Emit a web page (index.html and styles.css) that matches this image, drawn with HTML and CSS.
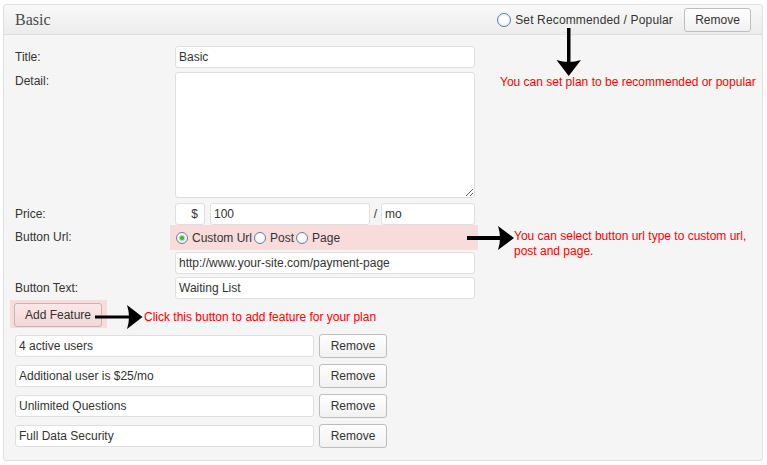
FILE: index.html
```html
<!DOCTYPE html>
<html>
<head>
<meta charset="utf-8">
<link rel="stylesheet" href="styles.css">
</head>
<body>
<div class="page">
  <div class="panel">
    <div class="panel-head">
      <h3 class="panel-title">Basic</h3>
      <div class="head-actions">
        <label class="radio radio-lg"><span class="radio-dot"></span>Set Recommended / Popular</label>
        <button class="btn btn-head">Remove</button>
      </div>
    </div>
    <div class="panel-body">
      <div class="field">
        <span class="field-label">Title:</span>
        <input class="input input-full" value="Basic">
      </div>
      <div class="field field-detail">
        <span class="field-label">Detail:</span>
        <textarea class="textarea"></textarea>
      </div>
      <div class="field field-price">
        <span class="field-label">Price:</span>
        <div class="price-group">
          <input class="input input-currency" value="$">
          <input class="input input-amount" value="100">
          <span class="slash">/</span>
          <input class="input input-period" value="mo">
        </div>
      </div>
      <div class="field field-url">
        <span class="field-label">Button Url:</span>
        <div class="url-types">
          <label class="radio"><span class="radio-dot is-checked"></span>Custom Url</label>
          <label class="radio"><span class="radio-dot"></span>Post</label>
          <label class="radio"><span class="radio-dot"></span>Page</label>
        </div>
      </div>
      <div class="field field-urlinput">
        <span class="field-label"></span>
        <input class="input input-full" value="http://www.your-site.com/payment-page">
      </div>
      <div class="field field-text">
        <span class="field-label">Button Text:</span>
        <input class="input input-full" value="Waiting List">
      </div>
      <div class="add-feature-wrap">
        <button class="btn btn-add">Add Feature</button>
      </div>
      <div class="features">
        <div class="feature-row">
          <input class="input input-feature" value="4 active users">
          <button class="btn btn-remove">Remove</button>
        </div>
        <div class="feature-row">
          <input class="input input-feature" value="Additional user is $25/mo">
          <button class="btn btn-remove">Remove</button>
        </div>
        <div class="feature-row">
          <input class="input input-feature" value="Unlimited Questions">
          <button class="btn btn-remove">Remove</button>
        </div>
        <div class="feature-row">
          <input class="input input-feature" value="Full Data Security">
          <button class="btn btn-remove">Remove</button>
        </div>
      </div>
    </div>
  </div>

  <svg class="arrows" width="767" height="465" viewBox="0 0 767 465">
    <rect x="567" y="28" width="3.5" height="34" fill="#000"/>
    <path d="M556.5,60 L568.7,76 L581,60 Q568.7,64 556.5,60 Z" fill="#000"/>
    <rect x="467" y="236" width="34" height="4" fill="#000"/>
    <path d="M498,226 L514,238 L498,250 Q502,238 498,226 Z" fill="#000"/>
    <rect x="95" y="315.5" width="34" height="3" fill="#000"/>
    <path d="M127,305 L142.5,317 L127,329 Q131,317 127,305 Z" fill="#000"/>
  </svg>
  <div class="note note-popular">You can set plan to be recommended or popular</div>
  <div class="note note-url">You can select button url type to custom url,<br>post and page.</div>
  <div class="note note-feature">Click this button to add feature for your plan</div>
</div>
</body>
</html>
```

FILE: styles.css
```css
* { box-sizing: border-box; }

html, body {
  margin: 0;
  padding: 0;
  background: #ffffff;
}

body {
  font-family: "Liberation Sans", Arial, sans-serif;
  font-size: 12px;
  color: #333333;
}

.page {
  position: relative;
  width: 767px;
  height: 465px;
  padding: 4px 4px 0 3px;
}

.panel {
  width: 760px;
  border: 1px solid #dfdfdf;
  border-radius: 3px;
  background: #f5f5f5;
}

.panel-head {
  height: 30px;
  display: flex;
  align-items: center;
  justify-content: space-between;
  padding: 0 11px 0 11px;
  background: linear-gradient(#f9f9f9, #ececec);
  border-bottom: 1px solid #dfdfdf;
  border-radius: 3px 3px 0 0;
}

.panel-title {
  margin: 0;
  font-family: "Liberation Serif", "Times New Roman", serif;
  font-weight: normal;
  font-size: 16px;
  color: #4a4a4a;
  line-height: 20px;
}

.head-actions {
  display: flex;
  align-items: center;
  gap: 11px;
}

.radio {
  display: inline-flex;
  align-items: center;
  gap: 4px;
  color: #333;
  white-space: nowrap;
}

.radio-dot {
  width: 12px;
  height: 12px;
  border-radius: 50%;
  border: 1px solid #6f7f9a;
  background: radial-gradient(circle at 50% 40%, #ffffff 30%, #e4e8ee 100%);
  display: inline-block;
  position: relative;
}

.radio-lg {
  letter-spacing: 0.15px;
}

.radio-lg .radio-dot {
  width: 14px;
  height: 14px;
  border-color: #5b7aa3;
}

.radio-dot.is-checked::after {
  content: "";
  position: absolute;
  left: 3px;
  top: 3px;
  width: 4px;
  height: 4px;
  border-radius: 50%;
  background: #3fae3a;
  box-shadow: 0 0 1px 1px rgba(80, 170, 70, 0.5);
}

.btn {
  font-family: "Liberation Sans", Arial, sans-serif;
  font-size: 12px;
  color: #333;
  border: 1px solid #bdbdbd;
  border-radius: 3px;
  background: linear-gradient(#ffffff, #f1f1f1);
  padding: 0;
  height: 24px;
  line-height: 22px;
  cursor: pointer;
}

.btn-head {
  width: 67px;
}

.panel-body {
  padding: 11px 11px 12px 11px;
}

.field {
  display: flex;
  align-items: flex-start;
}

.field-label {
  width: 160px;
  flex: none;
  line-height: 22px;
  color: #333;
}

.input {
  font-family: "Liberation Sans", Arial, sans-serif;
  font-size: 12px;
  color: #333;
  height: 22px;
  border: 1px solid #dfdfdf;
  border-radius: 3px;
  background: #ffffff;
  padding: 0 3px;
  margin: 0;
  outline: none;
}

.input-full {
  width: 300px;
}

.field-detail {
  margin-top: 4px;
}

.field-detail .field-label {
  line-height: 18px;
}

.textarea {
  width: 300px;
  height: 126px;
  border: 1px solid #dfdfdf;
  border-radius: 3px;
  background: #ffffff;
  margin: 0;
  padding: 2px 3px;
  resize: both;
  font-family: "Liberation Sans", Arial, sans-serif;
  font-size: 12px;
  outline: none;
}

.field-price {
  margin-top: 5px;
}

.price-group {
  display: flex;
  align-items: center;
  width: 300px;
}

.input-currency {
  width: 30px;
  text-align: right;
  padding-right: 6px;
}

.input-amount {
  width: 160px;
  margin-left: 5px;
}

.slash {
  width: 11px;
  text-align: center;
  line-height: 22px;
}

.input-period {
  width: 94px;
}

.field-url {
  margin-top: 0;
  align-items: center;
}

.field-url .field-label {
  line-height: 25px;
}

.url-types {
  display: flex;
  align-items: center;
  gap: 2px;
  height: 25px;
  width: 308px;
  margin-left: -5px;
  padding-left: 6px;
  background: #f8dcdc;
}

.field-urlinput {
  margin-top: 2px;
}

.field-text {
  margin-top: 3px;
}

.add-feature-wrap {
  display: inline-block;
  margin: 1px 0 0 -5px;
  padding: 3px 5px 1px 4px;
  background: #f8dcdc;
}

.btn-add {
  width: 88px;
  background: linear-gradient(#fbe7e7, #f3d8d8);
  border-color: #c7b4b4;
}

.features {
  display: flex;
  flex-direction: column;
  gap: 6px;
  margin-top: 6px;
}

.feature-row {
  display: flex;
  align-items: center;
  gap: 5px;
  height: 24px;
}

.input-feature {
  width: 299px;
}

.btn-remove {
  width: 68px;
}

.arrows {
  position: absolute;
  left: 0;
  top: 0;
  pointer-events: none;
}

.note {
  position: absolute;
  color: #ff0000;
  font-size: 12px;
  line-height: 15px;
  white-space: nowrap;
}

.note-popular {
  left: 500px;
  top: 75px;
}

.note-url {
  left: 514px;
  top: 229px;
}

.note-feature {
  left: 144px;
  top: 310px;
}
```
